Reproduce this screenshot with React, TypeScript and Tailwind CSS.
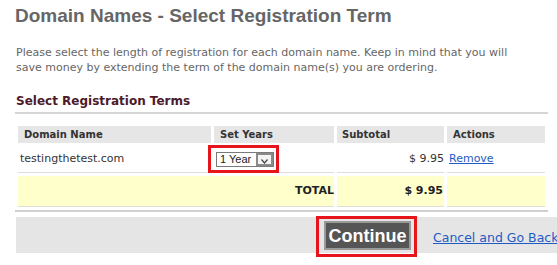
export default function App() {
  return (
    <div className="w-[557px] h-[265px] overflow-hidden bg-white font-['DejaVu_Sans',sans-serif]">
      <div className="pl-[15px]">
        <h1 className="pt-[5px] text-[19px] leading-[22px] font-bold text-[#666666] font-['Liberation_Sans',Arial,sans-serif]">
          Domain Names - Select Registration Term
        </h1>
        <p className="mt-[18px] w-[540px] pl-px text-[11px] leading-[15px] text-[#666666]">
          Please select the length of registration for each domain name. Keep in mind that you will
          <br />
          save money by extending the term of the domain name(s) you are ordering.
        </p>
        <h2 className="mt-[19px] w-[533px] border-b-2 border-[#d6d6d6] pl-px pb-[3px] text-[12px] leading-[15px] font-bold text-[#4d1a2a]">
          Select Registration Terms
        </h2>

        <table className="mt-[9px] w-[533px] table-fixed border-separate border-spacing-[3px] border-b-2 border-[#d0d0d0] text-[11px]">
          <colgroup>
            <col className="w-[193px]" />
            <col className="w-[120px]" />
            <col className="w-[107px]" />
            <col className="w-[98px]" />
          </colgroup>
          <thead>
            <tr className="h-[17px] bg-[#e6e6e6] text-left text-[10px] font-bold text-[#333333]">
              <th className="p-0 pl-[6px]">Domain Name</th>
              <th className="p-0 pl-[6px]">Set Years</th>
              <th className="p-0 pl-[5px]">Subtotal</th>
              <th className="p-0 pl-[6px]">Actions</th>
            </tr>
          </thead>
          <tbody>
            <tr className="h-[27px] text-[#333333]">
              <td className="border-b border-[#dddddd] p-0 pl-[2px]">testingthetest.com</td>
              <td className="border-b border-[#dddddd] p-0 pl-[2px]">
                <div className="relative flex h-[15px] w-[58px] items-stretch border border-[#7a7a7a] bg-white">
                  <span className="flex-1 pl-[3px] text-[11px] leading-[13px] text-[#222] font-['Liberation_Sans',Arial,sans-serif]">
                    1 Year
                  </span>
                  <span className="flex w-[17px] items-end justify-center border-2 border-[#8a8a8a] bg-[#f4f4f4]">
                    <svg width="7" height="5" viewBox="0 0 7 5">
                      <path d="M0.5 0.5 L3.5 4 L6.5 0.5" fill="none" stroke="#444" strokeWidth="1.2" />
                    </svg>
                  </span>
                  <div className="absolute -left-[9px] -top-[8px] h-[28px] w-[71px] border-[3px] border-[#e8141c]" />
                </div>
              </td>
              <td className="border-b border-[#dddddd] p-0 text-right">$ 9.95</td>
              <td className="border-b border-[#dddddd] p-0 pl-[2px]">
                <a href="#" className="text-[#1e5bc6] underline">Remove</a>
              </td>
            </tr>
            <tr className="h-[31px] bg-[#ffffcc] font-bold text-[#222222]">
              <td colSpan={2} className="border-b border-[#dddddd] p-0 text-right">TOTAL</td>
              <td className="border-b border-[#dddddd] p-0 pr-px text-right">$ 9.95</td>
              <td className="border-b border-[#dddddd] p-0"></td>
            </tr>
          </tbody>
        </table>

        <div className="mt-[5px] ml-px flex h-[36px] w-[560px] items-start bg-[#e5e5e5] pl-[300px]">
          <div className="-mt-px border-[3px] border-[#e8141c] pt-[2px] pb-[4px] pl-[5px] pr-[3px]">
            <button className="h-[29px] w-[87px] border-2 border-[#9a9a9a] bg-[#555555] text-[18px] leading-[24px] font-bold text-white font-['Liberation_Sans',Arial,sans-serif]">
              Continue
            </button>
          </div>
          <a href="#" className="ml-[16px] mt-[13px] whitespace-nowrap text-[12.5px] leading-[15px] text-[#1e5bc6] underline">
            Cancel and Go Back
          </a>
        </div>
      </div>
    </div>
  );
}
